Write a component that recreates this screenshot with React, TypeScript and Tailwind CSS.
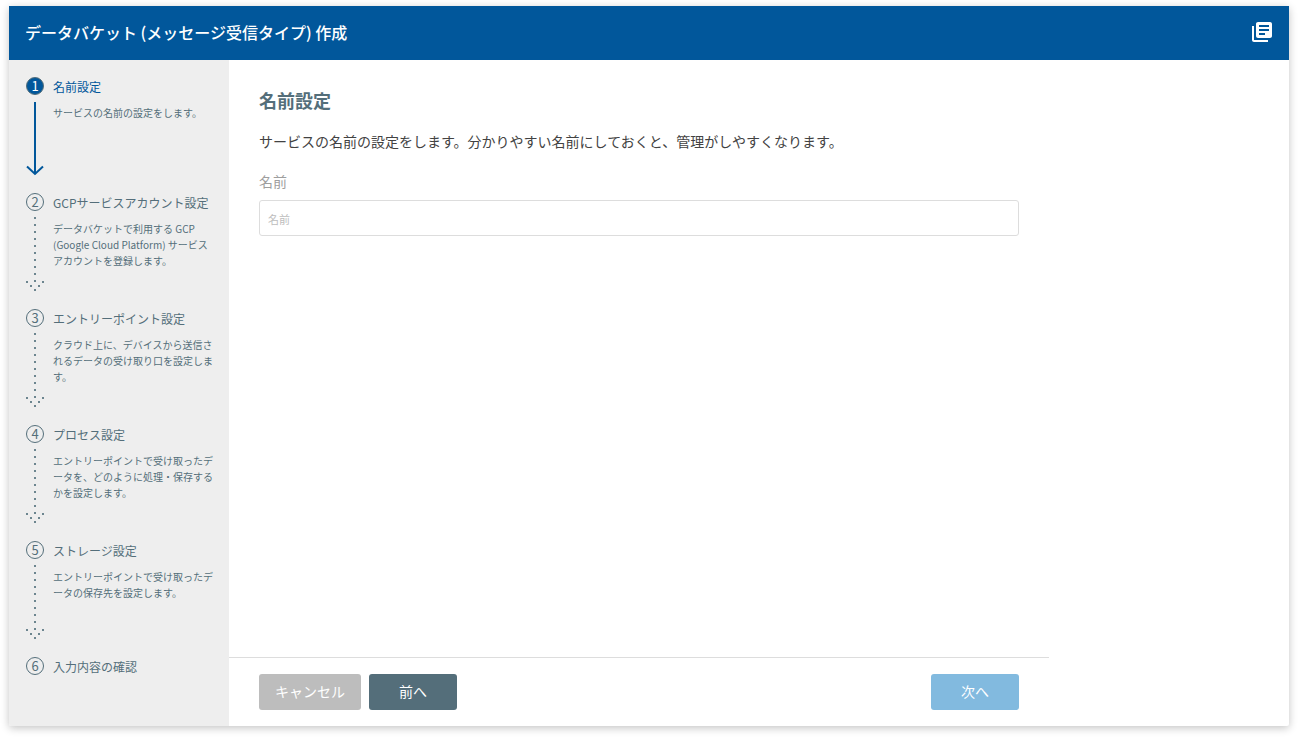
import React from "react";

type Step = { title: string; description?: string };

const steps: Step[] = [
  { title: "名前設定", description: "サービスの名前の設定をします。" },
  {
    title: "GCPサービスアカウント設定",
    description:
      "データバケットで利用する GCP (Google Cloud Platform) サービスアカウントを登録します。",
  },
  {
    title: "エントリーポイント設定",
    description:
      "クラウド上に、デバイスから送信されるデータの受け取り口を設定します。",
  },
  {
    title: "プロセス設定",
    description:
      "エントリーポイントで受け取ったデータを、どのように処理・保存するかを設定します。",
  },
  {
    title: "ストレージ設定",
    description: "エントリーポイントで受け取ったデータの保存先を設定します。",
  },
  { title: "入力内容の確認" },
];

function SolidArrow() {
  return (
    <svg width="18" height="76" viewBox="0 0 18 76" fill="none" stroke="#01579b" strokeWidth="2" aria-hidden="true">
      <path d="M9 1V73M1 65.5L9 73L17 65.5" />
    </svg>
  );
}

const arrowDots: [number, number][] = [
  ...Array.from({ length: 9 }, (_, i): [number, number] => [8, i * 7]),
  [8, 63],
  [0, 64],
  [16, 64],
  [4, 68],
  [12, 68],
  [8, 72],
];

function DottedArrow() {
  return (
    <svg width="18" height="76" viewBox="0 0 18 76" fill="#6c858f" aria-hidden="true">
      {arrowDots.map(([x, y]) => (
        <rect key={`${x}-${y}`} x={x} y={y} width="2" height="2" />
      ))}
    </svg>
  );
}

function StepItem({ step, index }: { step: Step; index: number }) {
  const active = index === 0;
  return (
    <li
      aria-current={active ? "step" : undefined}
      className={`flex gap-[9px] ${step.description ? "min-h-[116px]" : ""}`}
    >
      <div className="flex w-[18px] shrink-0 flex-col items-center">
        <span
          className={`mb-[6px] flex size-[18px] items-center justify-center rounded-full border text-[13px] leading-[16px] ${
            active
              ? "border-[#546e7a] bg-[#01579b] text-white"
              : "border-[#546e7a]"
          }`}
        >
          {index + 1}
        </span>
        {step.description && (active ? <SolidArrow /> : <DottedArrow />)}
      </div>
      <div className="min-w-0 flex-1">
        <h3 className={`text-xs leading-5 ${active ? "text-[#01579b]" : ""}`}>
          {step.title}
        </h3>
        {step.description && (
          <p className="mt-2 text-[10px] leading-4">{step.description}</p>
        )}
      </div>
    </li>
  );
}

export default function App() {
  return (
    <div className="flex h-screen flex-col bg-white px-[9px] pt-[6px] pb-3 font-['Noto_Sans_CJK_JP',sans-serif] text-[#424242]">
      <div className="flex min-h-0 flex-1 flex-col rounded-xs bg-white shadow-[0_2px_8px_rgba(0,0,0,0.24)]">
        <header className="flex h-[54px] shrink-0 items-center justify-between bg-[#01579b] pr-[15px] pb-0.5 pl-4 text-white">
          <h1 className="text-base font-medium">データバケット (メッセージ受信タイプ) 作成</h1>
          <button type="button" aria-label="ドキュメント">
            <svg width="24" height="24" viewBox="0 0 24 24" fill="currentColor" aria-hidden="true">
              <path d="M4 6H2v14c0 1.100.9 2 2 2h14v-2H4V6zm16-4H8c-1.100 0-2 .9-2 2v12c0 1.100.9 2 2 2h12c1.100 0 2-.9 2-2V4c0-1.100-.9-2-2-2zm-1 9H9V9h10v2zm-4 4H9v-2h6v2zm4-8H9V5h10v2z" />
            </svg>
          </button>
        </header>
        <div className="flex min-h-0 flex-1">
          <aside className="w-[220px] shrink-0 rounded-bl-xs bg-[#eeeeee] pt-[17px] pr-[15px] pl-[17px] text-[#546e7a]">
            <ol>
              {steps.map((step, index) => (
                <StepItem key={step.title} step={step} index={index} />
              ))}
            </ol>
          </aside>
          <main className="flex max-w-[820px] min-w-0 flex-1 flex-col">
            <section className="flex-1 px-[30px] pt-7">
              <h2 className="text-lg leading-6 font-bold text-[#546e7a]">名前設定</h2>
              <p className="mt-[19px] text-sm leading-5">
                サービスの名前の設定をします。分かりやすい名前にしておくと、管理がしやすくなります。
              </p>
              <label htmlFor="service-name" className="mt-5 block text-sm leading-5 text-[#9e9e9e]">
                名前
              </label>
              <input
                id="service-name"
                type="text"
                placeholder="名前"
                className="mt-[9px] block h-9 w-full rounded-[3px] border border-[#dddddd] px-2 pt-px text-[11px] placeholder:text-[#bdbdbd]"
              />
            </section>
            <footer className="flex gap-2 border-t border-[#dddddd] px-[30px] py-4 text-sm text-white">
              <button type="button" className="h-9 w-[102px] rounded-[3px] bg-[#bdbdbd] pb-0.5">
                キャンセル
              </button>
              <button type="button" className="h-9 w-[88px] rounded-[3px] bg-[#546e7a] pb-0.5">
                前へ
              </button>
              <button type="button" className="ml-auto h-9 w-[88px] rounded-[3px] bg-[#82badf] pb-0.5">
                次へ
              </button>
            </footer>
          </main>
        </div>
      </div>
    </div>
  );
}
